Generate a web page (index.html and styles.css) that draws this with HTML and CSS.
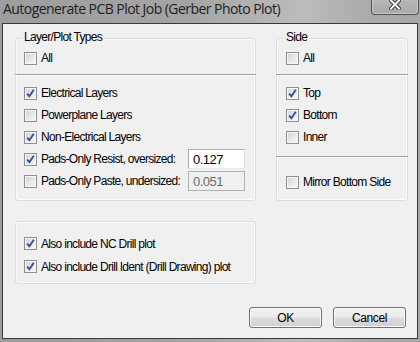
FILE: index.html
```html
<!DOCTYPE html>
<html lang="en">
<head>
    <meta charset="UTF-8">
    <meta name="viewport" content="width=device-width, initial-scale=1.0">
    <title>Autogenerate PCB Plot Job (Gerber Photo Plot)</title>
    <link rel="stylesheet" href="styles.css">
</head>
<body>

<div class="window">

    <!-- Barre de titre -->
    <div class="titlebar">
        <span class="title">Autogenerate PCB Plot Job (Gerber Photo Plot)</span>
        <div class="close">
            <svg width="12" height="11" viewBox="0 0 12 11">
                <path d="M2 1.5 L10 9.5 M10 1.5 L2 9.5" stroke="#3a3a3a" stroke-width="4" stroke-linecap="square"/>
                <path d="M2 1.5 L10 9.5 M10 1.5 L2 9.5" stroke="#f4f4f4" stroke-width="2" stroke-linecap="square"/>
            </svg>
        </div>
    </div>

    <div class="client">

        <div class="groups">
            <!-- Types de couches -->
            <div class="group layers">
                <span class="caption">Layer/Plot Types</span>
                <label class="row"><span class="cb"></span>All</label>
                <div class="sep"></div>
                <label class="row"><span class="cb checked"></span>Electrical Layers</label>
                <label class="row"><span class="cb"></span>Powerplane Layers</label>
                <label class="row"><span class="cb checked"></span>Non-Electrical Layers</label>
                <label class="row"><span class="cb checked"></span>Pads-Only Resist, oversized:
                    <input class="num" type="text" value="0.127"></label>
                <label class="row"><span class="cb"></span>Pads-Only Paste, undersized:
                    <input class="num" type="text" value="0.051" disabled></label>
            </div>

            <!-- Faces -->
            <div class="group side">
                <span class="caption">Side</span>
                <label class="row"><span class="cb"></span>All</label>
                <div class="sep"></div>
                <label class="row"><span class="cb checked"></span>Top</label>
                <label class="row"><span class="cb checked"></span>Bottom</label>
                <label class="row"><span class="cb"></span>Inner</label>
                <div class="sep sep-low"></div>
                <label class="row mirror"><span class="cb"></span>Mirror Bottom Side</label>
            </div>
        </div>

        <!-- Percage -->
        <div class="group drill">
            <label class="row"><span class="cb checked"></span>Also include NC Drill plot</label>
            <label class="row"><span class="cb checked"></span>Also include Drill Ident (Drill Drawing) plot</label>
        </div>

        <div class="buttons">
            <button class="btn">OK</button>
            <button class="btn">Cancel</button>
        </div>

    </div>
</div>

</body>
</html>
```

FILE: styles.css
```css
body {
    margin: 0;
    background-color: #a6a6a6;
    font-family: "Liberation Sans", Arial, sans-serif;
    font-size: 12px;
    letter-spacing: -0.7px;
    color: #000;
}
.window {
    width: 420px;
    height: 342px;
    display: flex;
    flex-direction: column;
    background: linear-gradient(90deg, #9d9d9d 0%, #a4a4a4 45%, #bcbcbc 72%, #aaaaaa 88%, #a7a7a7 100%);
}
.titlebar {
    height: 23px;
    display: flex;
    align-items: flex-start;
    justify-content: space-between;
    padding-left: 3px;
}
.title {
    font-family: "Open Sans", "Noto Sans", sans-serif;
    font-size: 14px;
    line-height: 18px;
    color: #1e1e1e;
    letter-spacing: -0.55px;
}
.close {
    width: 46px;
    height: 15px;
    margin-right: 1px;
    margin-top: -1px;
    border: 1px solid #505050;
    border-top: none;
    border-radius: 0 0 4px 4px;
    box-shadow: inset 0 0 0 1px #c8c8c8;
    background: linear-gradient(#b8b8b8, #a9a9a9);
    display: flex;
    justify-content: center;
    align-items: flex-start;
}
.client {
    flex: 1;
    margin: 0 2px 3px 2px;
    border: 1px solid #3a3a3a;
    background-color: #f0f0f0;
    padding: 14px 9px 0 12px;
}
.groups {
    display: grid;
    grid-template-columns: 241px 132px;
    column-gap: 20px;
}
.group {
    position: relative;
    border: 1px solid #d5dfe5;
    border-radius: 3px;
    box-shadow: inset 0 0 0 1px #fbfbfb;
    padding: 8px 0 7px 0;
}
.caption {
    position: absolute;
    top: -9px;
    left: 6px;
    padding: 0 2px;
    background-color: #f0f0f0;
    line-height: 15px;
}
.side .caption {
    left: 7px;
}
.row {
    display: flex;
    align-items: center;
    height: 22px;
    padding-left: 8px;
    white-space: nowrap;
}
.side .row {
    padding-left: 9px;
}
.cb {
    width: 13px;
    height: 13px;
    box-sizing: border-box;
    border: 1px solid #8e8f8f;
    margin-right: 4px;
    flex-shrink: 0;
    background: linear-gradient(135deg, #cfd1d3 0%, #e6e7e8 50%, #f8f8f8 100%);
    box-shadow: inset 0 0 0 1px #f6f6f6;
}
.cb.checked {
    background-image: url("data:image/svg+xml,%3Csvg xmlns='http://www.w3.org/2000/svg' width='11' height='11'%3E%3Cpath d='M2.2 5.6 L4.4 8.2 L8.8 1.8' fill='none' stroke='%2334509a' stroke-width='1.9'/%3E%3C/svg%3E"),
        linear-gradient(135deg, #cfd1d3 0%, #e6e7e8 50%, #f8f8f8 100%);
}
.sep {
    height: 1px;
    border-bottom: 1px solid #ffffff;
    background-color: #a0a0a0;
    margin: 5px -1px 6px -1px;
}
.sep-low {
    margin-top: 8px;
    margin-bottom: 13px;
}
.num {
    margin-left: auto;
    margin-right: 10px;
    width: 57px;
    height: 20px;
    box-sizing: border-box;
    border: 1px solid #abadb3;
    border-right-color: #dbdfe6;
    border-bottom-color: #e3e9ef;
    padding: 0 4px;
    font-family: inherit;
    font-size: 13px;
    letter-spacing: -0.5px;
    color: #000;
    background-color: #fff;
}
.num:disabled {
    background-color: #f0f0f0;
    color: #6d6d6d;
    border-color: #adb2b5;
}
.drill {
    width: 241px;
    box-sizing: border-box;
    margin-top: 20px;
    padding: 10px 0 5px 0;
}
.drill .row {
    height: 23px;
}
.buttons {
    display: flex;
    justify-content: flex-end;
    gap: 11px;
    margin-top: 23px;
    margin-right: 2px;
}
.btn {
    width: 73px;
    height: 21px;
    border: 1px solid #707070;
    border-radius: 3px;
    box-shadow: inset 0 0 0 1px #fcfcfc;
    background: linear-gradient(#f2f2f2 0%, #ebebeb 48%, #dddddd 52%, #cfcfcf 100%);
    font-family: inherit;
    font-size: 12px;
    letter-spacing: -0.4px;
    color: #000;
    padding: 0;
}
```
